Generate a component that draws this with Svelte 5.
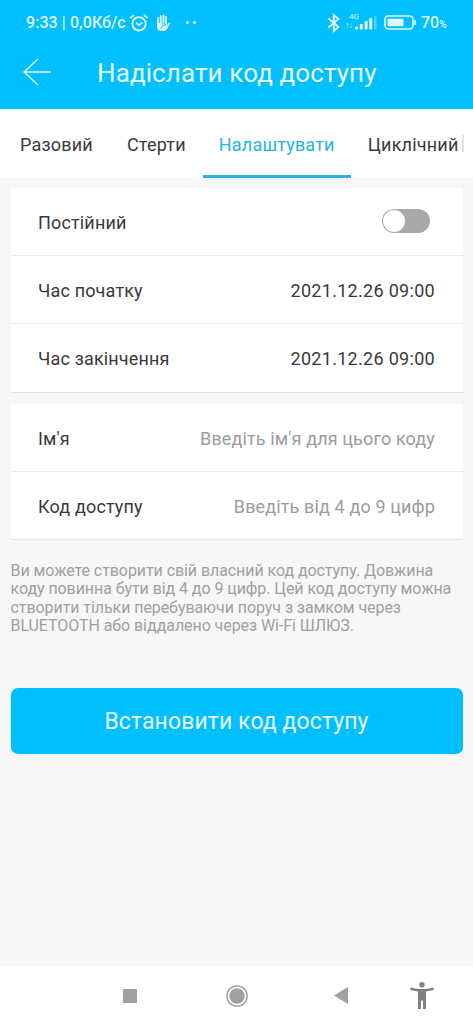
<script>
    let permanent = $state(false)
    let activeTab = $state("Налаштувати")
    let name = $state("")
    let code = $state("")

    const tabs = ["Разовий", "Стерти", "Налаштувати", "Циклічний"]
    const times = [
        { label: "Час початку", value: "2021.12.26 09:00" },
        { label: "Час закінчення", value: "2021.12.26 09:00" },
    ]
</script>

<div class="screen">
    <div class="status">
        <span class="clock">9:33 | 0,0Кб/с</span>
        <svg class="alarm" width="20" height="20" viewBox="0 0 20 20" fill="none" stroke="#dff8ff">
            <circle cx="10" cy="10.8" r="6.7" stroke-width="1.9" />
            <path d="M1.3 5.2 5 2M18.7 5.2 15 2" stroke-width="1.7" />
            <path d="m7 9.6 3 2.6 3.3-2.6" stroke-width="1.5" />
        </svg>
        <svg class="hand" width="15" height="18" viewBox="0 0 15 18" fill="none" stroke="#dff8ff" stroke-linecap="round">
            <path d="M2 4v7M4.7 2v9M7.4 1.5v9M10 2.6v8" stroke-width="1.8" />
            <path d="M1.1 9h9.8v2.2l2.2-2.6 1.2.5-3.2 6q-1.2 1.9-3.2 1.9H5q-2.8 0-3.9-3z" fill="#dff8ff" stroke="none" />
            <path d="m4.8 14 2.4-2.6" stroke="#00bfff" stroke-width="1" />
            <circle cx="8" cy="10.4" r="1.4" stroke="#00bfff" stroke-width=".8" />
        </svg>
        <span class="dots"><i></i><i></i></span>

        <svg class="bluetooth" width="14" height="20" viewBox="0 0 14 20" fill="none" stroke="#dff8ff" stroke-width="1.9">
            <path d="m1.5 5.5 10 8.5-4.7 4V2l4.7 4-10 8.5" />
        </svg>
        <div class="signal">
            <span>4G</span>
            <svg width="32" height="18" viewBox="0 0 32 18" fill="#dff8ff">
                <path d="M1.5 9v5M0 10.8 1.5 9 3 10.8M5 14V9M3.7 12.3 5 14l1.4-1.7" fill="none" stroke="#dff8ff" stroke-width=".7" opacity=".6" />
                <rect x="9" y="12.5" width="3" height="3" rx="1" />
                <rect x="13.8" y="10" width="3" height="5.5" rx=".8" />
                <rect x="18.6" y="7" width="3" height="8.5" rx=".8" />
                <rect x="23.2" y="4" width="3" height="11.5" rx=".8" />
                <rect x="28" y="2" width="2.5" height="13.5" rx=".8" opacity=".35" />
            </svg>
        </div>
        <svg class="battery" width="33" height="15" viewBox="0 0 33 15" fill="#dff8ff">
            <rect x="1" y="1" width="28" height="13" rx="3.4" fill="none" stroke="#dff8ff" stroke-width="1.7" />
            <rect x="3.5" y="3.7" width="16" height="7.6" rx="1" />
            <rect x="30.3" y="5" width="1.8" height="5" rx=".8" />
        </svg>
        <span class="percent">70<small>%</small></span>
    </div>

    <header>
        <svg width="28" height="28" viewBox="0 0 28 28" fill="none" stroke="#dff8ff" stroke-width="1.4">
            <path d="M28 14H1M15 1 1 14l14 13" />
        </svg>
        <h1>Надіслати код доступу</h1>
    </header>

    <nav class="tabs">
        {#each tabs as tab}
            <button class:active={tab === activeTab} onclick={() => (activeTab = tab)}>{tab}</button>
        {/each}
        <span class="more"></span>
    </nav>

    <main>
        <section>
            <div class="row">
                <span>Постійний</span>
                <button
                    class="switch"
                    class:on={permanent}
                    aria-label="Постійний"
                    onclick={() => (permanent = !permanent)}
                ></button>
            </div>
            {#each times as time}
                <div class="row">
                    <span>{time.label}</span>
                    <span class="time">{time.value}</span>
                </div>
            {/each}
        </section>

        <section>
            <label class="row">
                <span>Ім'я</span>
                <input bind:value={name} placeholder="Введіть ім'я для цього коду" />
            </label>
            <label class="row">
                <span>Код доступу</span>
                <input bind:value={code} placeholder="Введіть від 4 до 9 цифр" />
            </label>
        </section>

        <p>
            Ви можете створити свій власний код доступу. Довжина коду повинна бути від 4 до 9 цифр.
            Цей код доступу можна створити тільки перебуваючи поруч з замком через BLUETOOTH або
            віддалено через Wi-Fi ШЛЮЗ.
        </p>

        <button class="submit">Встановити код доступу</button>
    </main>

    <footer>
        <svg width="14" height="14" viewBox="0 0 14 14"><rect width="14" height="14" rx=".6" fill="#a0a0a0" /></svg>
        <svg width="22" height="22" viewBox="0 0 22 22">
            <circle cx="11" cy="11" r="10.1" fill="none" stroke="#9b9b9b" stroke-width="1.4" />
            <circle cx="11" cy="11" r="7.7" fill="#a0a0a0" />
        </svg>
        <svg width="14" height="17" viewBox="0 0 14 17"><path d="M14 0v17L0 8.5z" fill="#a0a0a0" /></svg>
        <svg width="24" height="27" viewBox="0 0 24 27" fill="#808080">
            <circle cx="12" cy="2.8" r="2.7" />
            <path d="M.6 5.5Q12 8.7 23.4 5.5L23.9 8 16 9.5V27H13V18.5H11V27H8V9.5L.1 8z" />
        </svg>
    </footer>
</div>

<style>
    :global(body) {
        margin: 0;
        background: #f7f7f7;
    }

    .screen {
        display: flex;
        flex-direction: column;
        width: 473px;
        height: 1024px;
        overflow: hidden;
        background: #f7f7f7;
        color: #3a3a3a;
        font-family: Roboto, "Noto Sans", sans-serif;
        font-size: 18px;
    }

    button,
    input {
        border: 0;
        padding: 0;
        background: none;
        font: inherit;
        color: inherit;
        letter-spacing: inherit;
    }

    .status {
        display: flex;
        align-items: center;
        box-sizing: border-box;
        height: 45px;
        flex: none;
        padding: 0 26px;
        background: #00bfff;
        color: #dff8ff;
        font-size: 16px;
        font-weight: 500;
    }

    .clock {
        width: 103px;
        letter-spacing: 0.07px;
        white-space: nowrap;
    }

    .hand {
        margin-left: 7px;
    }

    .dots {
        display: flex;
        gap: 4px;
        margin: 0 auto 0 15px;
    }

    .dots i {
        width: 3px;
        height: 3px;
        border-radius: 50%;
        background: #dff8ff;
    }

    .signal {
        position: relative;
        display: flex;
        margin-left: 5px;
    }

    .signal span {
        position: absolute;
        left: 3px;
        top: -1px;
        font-size: 8px;
        font-weight: 400;
        line-height: 8px;
    }

    .battery {
        margin-left: 6px;
    }

    .percent {
        margin-left: 4px;
        width: 26px;
        white-space: nowrap;
    }

    .percent small {
        font-size: 10px;
    }

    header {
        display: flex;
        align-items: center;
        flex: none;
        height: 64px;
        padding: 0 23px;
        background: #00bfff;
        color: #e4faff;
    }

    header svg {
        margin-top: -10px;
    }

    h1 {
        margin: -8px 0 0 46px;
        font-size: 26px;
        font-weight: 400;
        letter-spacing: 0.1px;
        white-space: nowrap;
    }

    .tabs {
        display: flex;
        flex: none;
        height: 69px;
        padding-left: 3px;
        background: #fff;
        letter-spacing: 0.2px;
    }

    .tabs button {
        box-sizing: border-box;
        flex: none;
        padding: 4px 17px 0;
        border-bottom: 3px solid transparent;
        height: 69px;
    }

    .tabs .active {
        padding: 4px 16px 0;
        border-color: #2fb0dc;
        color: #25b4e2;
    }

    .more {
        width: 2px;
        height: 17px;
        margin: 26px 0 0 -14px;
        background: #e2e2e2;
    }

    main {
        flex: 1;
        padding: 10px 10.5px 0;
    }

    section {
        margin-bottom: 11px;
        background: #fff;
    }

    .row {
        display: flex;
        align-items: center;
        justify-content: space-between;
        box-sizing: border-box;
        height: 68.2px;
        padding: 2px 27.5px 0 27.5px;
        border-bottom: 1px solid #ececec;
        letter-spacing: 0.16px;
    }

    .row:last-child {
        border-color: #e2e2e2;
    }

    .time {
        letter-spacing: 0.3px;
    }

    .switch {
        display: flex;
        align-items: center;
        width: 48px;
        height: 24px;
        margin: -3px 5px 0 0;
        padding: 0 1px;
        border-radius: 12px;
        background: #a9a9a9;
    }

    .switch::before {
        content: "";
        width: 22px;
        height: 22px;
        border-radius: 50%;
        background: #fff;
    }

    .switch.on {
        justify-content: flex-end;
        background: #00bfff;
    }

    input {
        width: 280px;
        text-align: right;
        outline: none;
    }

    input::placeholder {
        color: #9c9c9c;
        letter-spacing: 0.13px;
        opacity: 1;
    }

    p {
        margin: 22px 0 0;
        color: #a0a0a0;
        font-size: 16px;
        line-height: 18.3px;
        letter-spacing: -0.07px;
    }

    .submit {
        display: block;
        width: 100%;
        height: 66px;
        margin-top: 53px;
        padding-top: 1px;
        border-radius: 7px;
        background: #00bfff;
        color: #e4faff;
        font-size: 23px;
        letter-spacing: 0.1px;
    }

    footer {
        display: flex;
        align-items: center;
        box-sizing: border-box;
        flex: none;
        height: 57px;
        padding-left: 123px;
        background: #fff;
    }

    footer svg:nth-child(2) {
        margin-left: 89px;
    }

    footer svg:nth-child(3) {
        margin-left: 86px;
    }

    footer svg:nth-child(4) {
        margin-left: 62px;
    }
</style>
